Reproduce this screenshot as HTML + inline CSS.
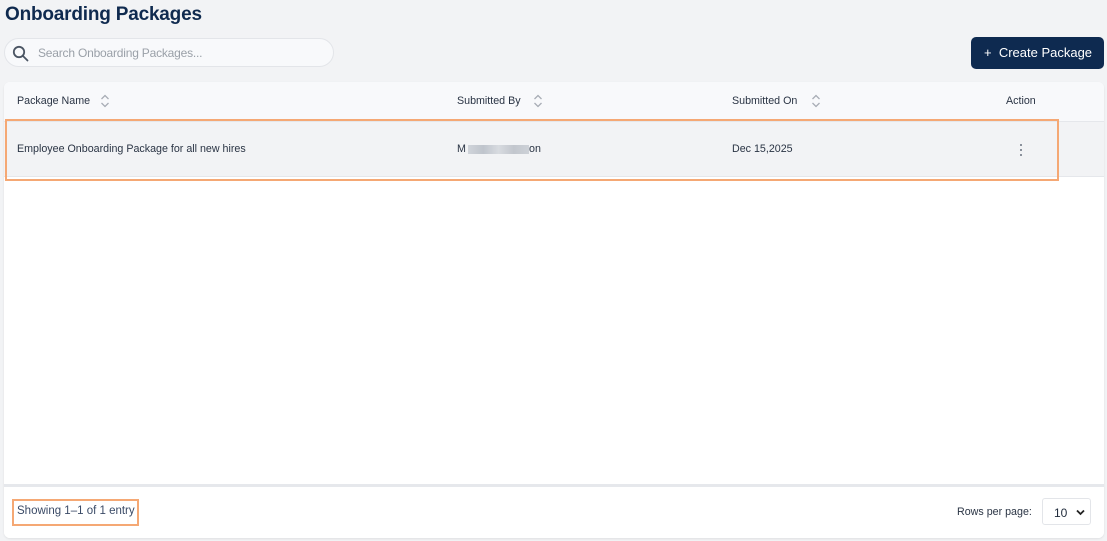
<!DOCTYPE html>
<html><head><style>
*{box-sizing:border-box;margin:0;padding:0}
body{width:1107px;height:541px;background:#f2f3f5;font-family:"Liberation Sans",sans-serif;position:relative;overflow:hidden;color:#1f2a3a}
.abs{position:absolute}
h1{position:absolute;left:5px;top:4px;font-size:19px;font-weight:bold;color:#0f2a4f;letter-spacing:-0.2px}
.search{left:4px;top:38px;width:330px;height:29px;border:1px solid #e3e5e9;border-radius:15px;background:#f8f9fb}
.search span{position:absolute;left:33px;top:7px;font-size:12px;color:#9aa0a8;letter-spacing:-0.2px}
.btn{left:971px;top:37px;width:133px;height:32px;background:#0e2a50;border-radius:5px;color:#fff;font-size:13px;line-height:32px;padding-left:13px}
.card{left:4px;top:82px;width:1100px;height:456px;background:#fff;border-radius:6px;box-shadow:0 1px 2px rgba(0,0,0,.08);overflow:hidden}
.hdr{left:0;top:0;width:1100px;height:40px;background:#f8f9fb;border-bottom:1px solid #e5e7eb}
.row{left:0;top:40px;width:1100px;height:55px;background:#f2f3f5;border-bottom:1px solid #e5e7eb}
.t{position:absolute;font-size:10.7px;color:#2a3444}
.sort{position:absolute;width:12px;height:18px}
.foot{left:0;top:402px;width:1100px;height:54px;border-top:3px solid #e6e8ec;background:#fff}
</style></head><body>
<h1>Onboarding Packages</h1>
<div class="abs search">
<svg class="abs" style="left:7px;top:6px" width="17" height="17" viewBox="0 0 17 17"><circle cx="7" cy="7" r="5.2" fill="none" stroke="#4b5563" stroke-width="1.8"/><line x1="11" y1="11" x2="15.5" y2="15.5" stroke="#4b5563" stroke-width="1.8" stroke-linecap="round"/></svg>
<span>Search Onboarding Packages...</span></div>
<div class="abs btn">+&nbsp;&nbsp;Create Package</div>
<div class="abs card">
<div class="abs hdr">
<div class="t" style="left:13px;top:13px">Package Name</div>
<svg class="sort" style="left:95px;top:10px" viewBox="0 0 12 18"><path d="M2.5 7L6 3.5L9.5 7M2.5 11L6 14.5L9.5 11" fill="none" stroke="#a8adb5" stroke-width="1.3"/></svg>
<div class="t" style="left:453px;top:13px">Submitted By</div>
<svg class="sort" style="left:528px;top:10px" viewBox="0 0 12 18"><path d="M2.5 7L6 3.5L9.5 7M2.5 11L6 14.5L9.5 11" fill="none" stroke="#a8adb5" stroke-width="1.3"/></svg>
<div class="t" style="left:728px;top:13px">Submitted On</div>
<svg class="sort" style="left:806px;top:10px" viewBox="0 0 12 18"><path d="M2.5 7L6 3.5L9.5 7M2.5 11L6 14.5L9.5 11" fill="none" stroke="#a8adb5" stroke-width="1.3"/></svg>
<div class="t" style="left:1002px;top:13px">Action</div>
</div>
<div class="abs row">
<div class="t" style="left:13px;top:21px">Employee Onboarding Package for all new hires</div>
<div class="t" style="left:453px;top:21px">M</div>
<div class="abs" style="left:464px;top:23px;width:61px;height:9px;background:linear-gradient(90deg,#d0d4da,#bfc4cc,#d8dbe0,#c2c6cd,#cdd1d7)"></div>
<div class="t" style="left:525px;top:21px">on</div>
<div class="t" style="left:728px;top:21px">Dec 15,2025</div>
<svg class="abs" style="left:1015px;top:21px" width="4" height="14"><circle cx="2" cy="2" r="1" fill="#6b7280"/><circle cx="2" cy="7" r="1" fill="#6b7280"/><circle cx="2" cy="12" r="1" fill="#6b7280"/></svg>
</div>
<div class="abs foot">
<div class="abs" style="left:8px;top:12px;width:127px;height:27px;border:2px solid #f5a874"></div>
<div class="t" style="left:13px;top:18px;font-size:11.5px;color:#3a4a66">Showing 1–1 of 1 entry</div>
<div class="t" style="left:953px;top:19px">Rows per page:</div>
<div class="abs" style="left:1038px;top:11px;width:49px;height:27px;border:1px solid #e3e5e9;border-radius:3px;font-size:12px;padding:7px 0 0 11px">10
<svg class="abs" style="left:33px;top:10px" width="9" height="7" viewBox="0 0 9 7"><path d="M1 1.5L4.5 5L8 1.5" fill="none" stroke="#222" stroke-width="1.8"/></svg></div>
</div>
</div>
<div class="abs" style="left:5px;top:119px;width:1054px;height:62px;border:2px solid #f5a874"></div>
</body></html>
